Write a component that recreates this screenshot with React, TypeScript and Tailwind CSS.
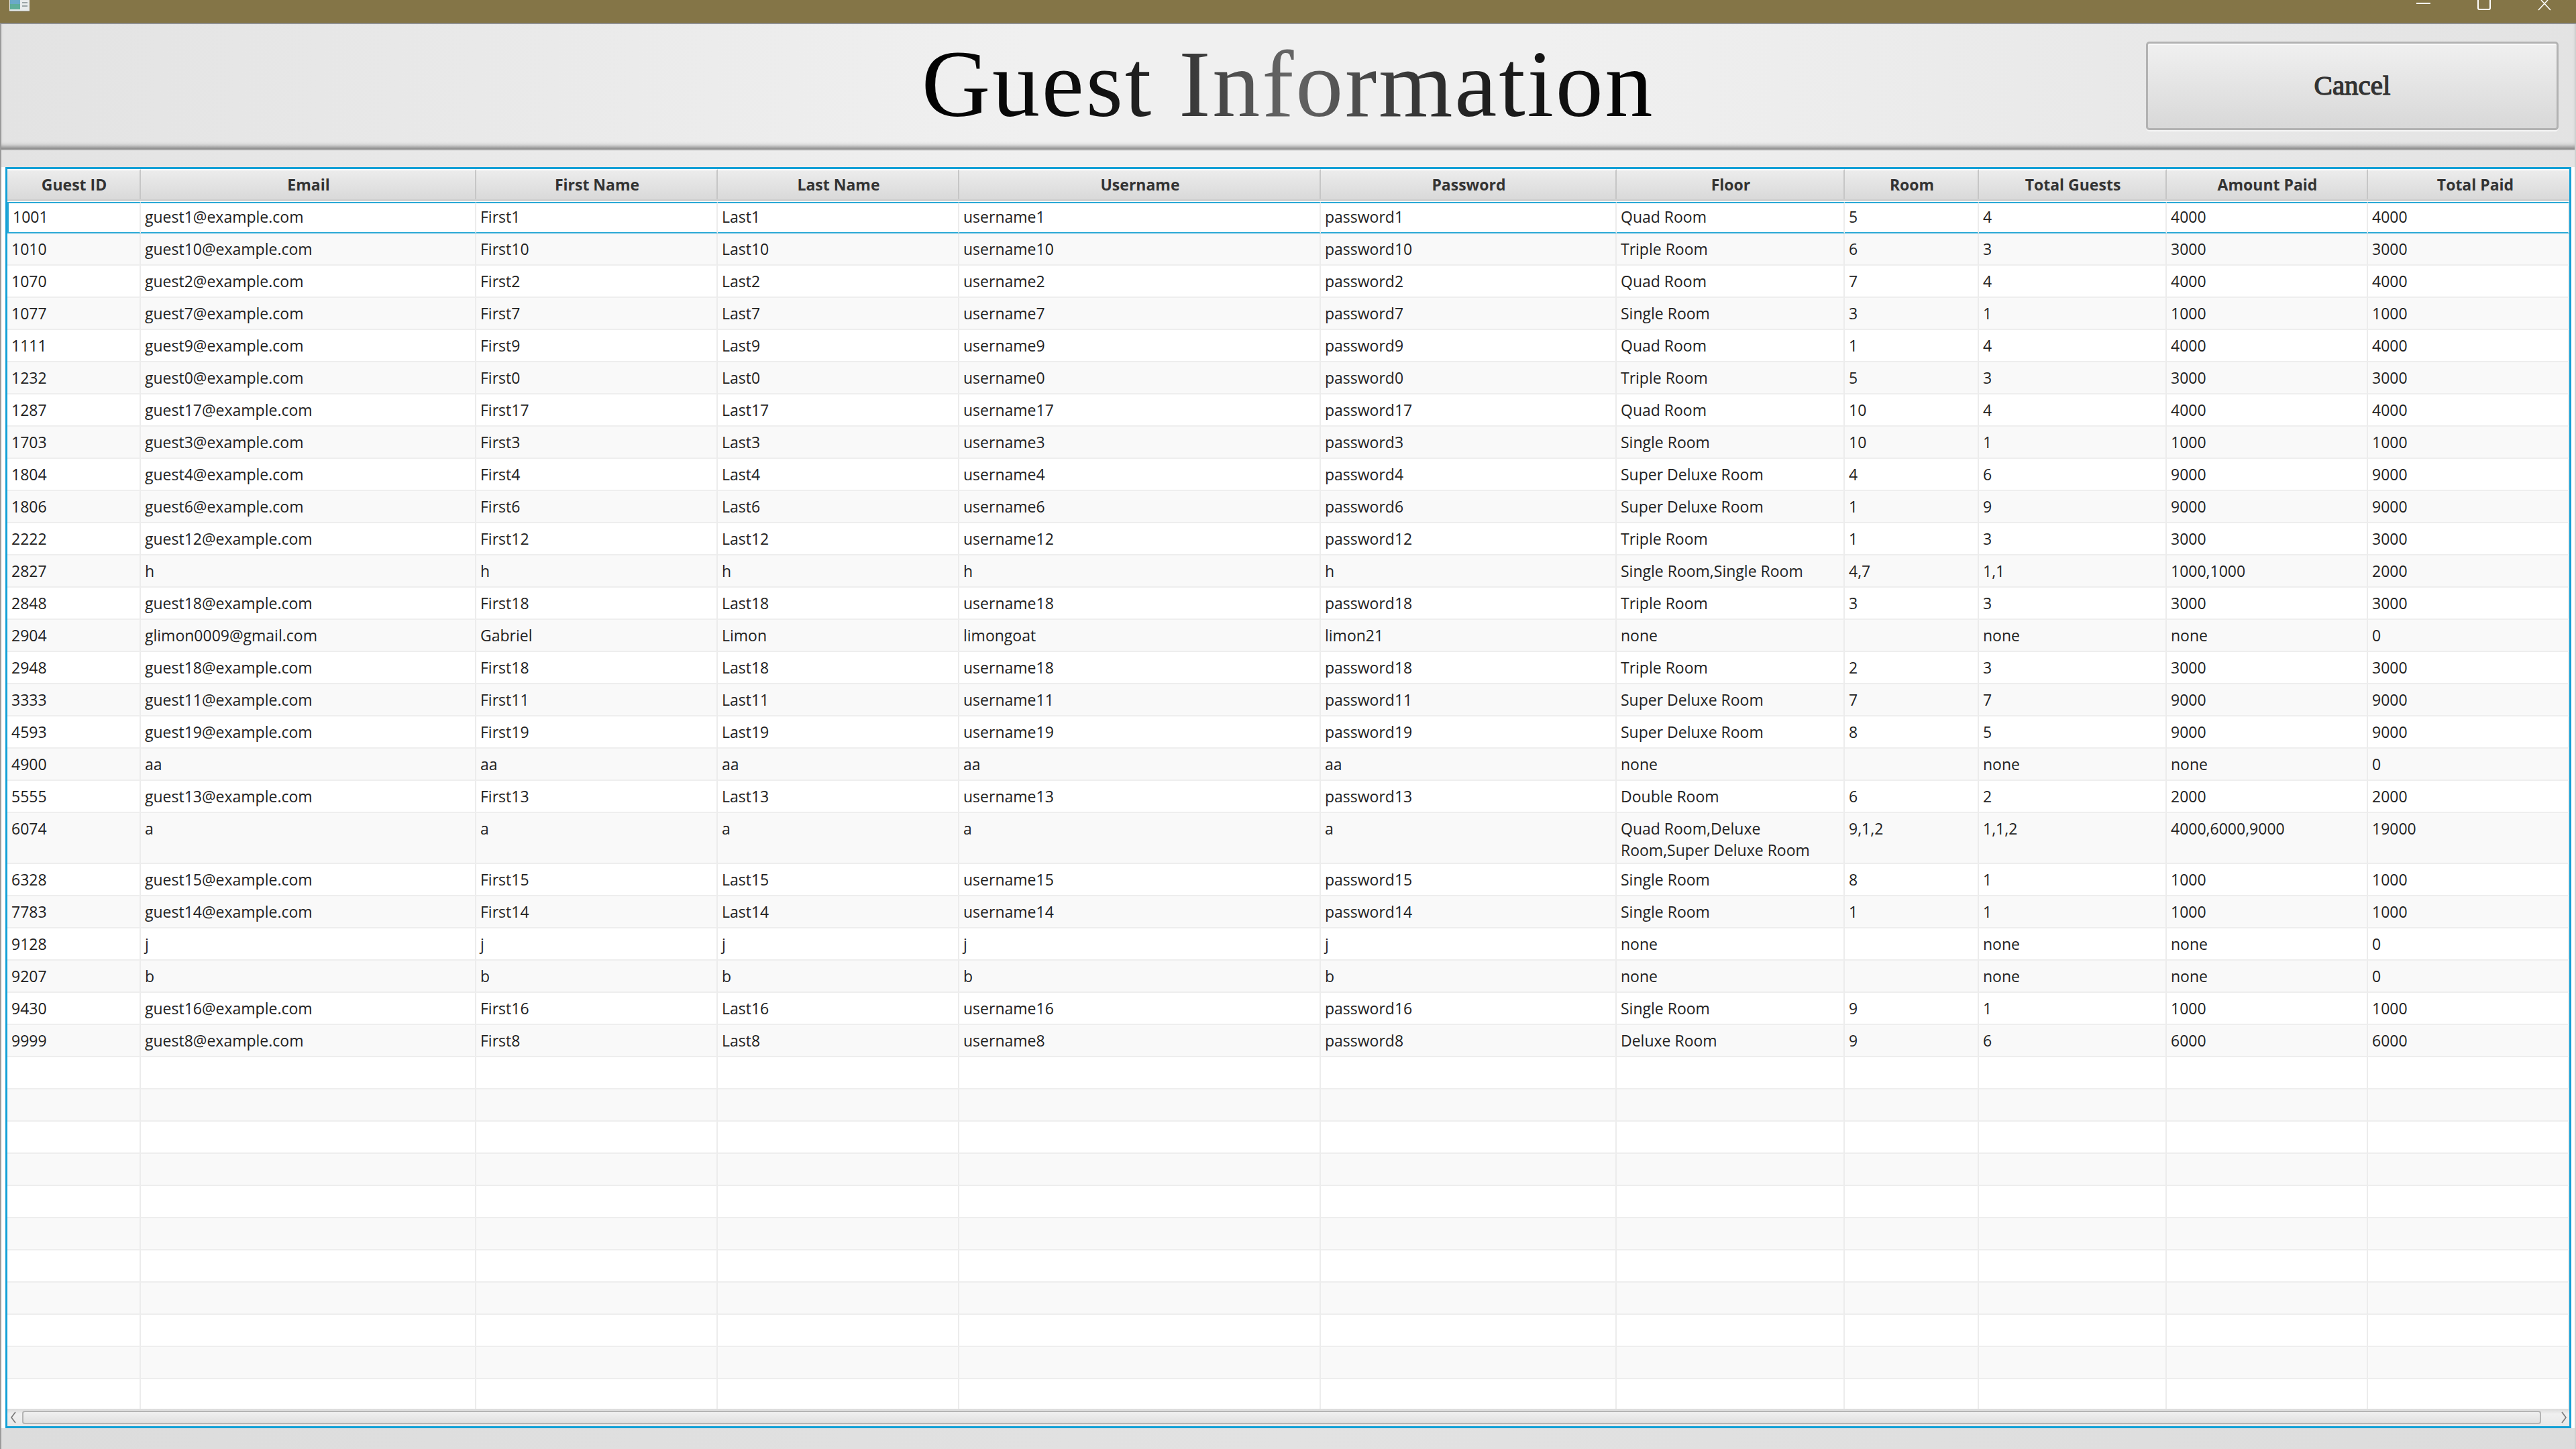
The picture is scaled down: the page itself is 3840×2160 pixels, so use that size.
import React from "react";

const headers = [
  "Guest ID",
  "Email",
  "First Name",
  "Last Name",
  "Username",
  "Password",
  "Floor",
  "Room",
  "Total Guests",
  "Amount Paid",
  "Total Paid",
];

const guest = (
  id: string,
  n: string,
  floor: string,
  room: string,
  total: string,
  paid: string
) => [
  id,
  `guest${n}@example.com`,
  `First${n}`,
  `Last${n}`,
  `username${n}`,
  `password${n}`,
  floor,
  room,
  total,
  paid,
  paid,
];

const blank = (id: string, v: string) => [id, v, v, v, v, v, "none", "", "none", "none", "0"];

const rows: string[][] = [
  guest("1001", "1", "Quad Room", "5", "4", "4000"),
  guest("1010", "10", "Triple Room", "6", "3", "3000"),
  guest("1070", "2", "Quad Room", "7", "4", "4000"),
  guest("1077", "7", "Single Room", "3", "1", "1000"),
  guest("1111", "9", "Quad Room", "1", "4", "4000"),
  guest("1232", "0", "Triple Room", "5", "3", "3000"),
  guest("1287", "17", "Quad Room", "10", "4", "4000"),
  guest("1703", "3", "Single Room", "10", "1", "1000"),
  guest("1804", "4", "Super Deluxe Room", "4", "6", "9000"),
  guest("1806", "6", "Super Deluxe Room", "1", "9", "9000"),
  guest("2222", "12", "Triple Room", "1", "3", "3000"),
  ["2827", "h", "h", "h", "h", "h", "Single Room,Single Room", "4,7", "1,1", "1000,1000", "2000"],
  guest("2848", "18", "Triple Room", "3", "3", "3000"),
  ["2904", "glimon0009@gmail.com", "Gabriel", "Limon", "limongoat", "limon21", "none", "", "none", "none", "0"],
  guest("2948", "18", "Triple Room", "2", "3", "3000"),
  guest("3333", "11", "Super Deluxe Room", "7", "7", "9000"),
  guest("4593", "19", "Super Deluxe Room", "8", "5", "9000"),
  blank("4900", "aa"),
  guest("5555", "13", "Double Room", "6", "2", "2000"),
  ["6074", "a", "a", "a", "a", "a", "Quad Room,Deluxe Room,Super Deluxe Room", "9,1,2", "1,1,2", "4000,6000,9000", "19000"],
  guest("6328", "15", "Single Room", "8", "1", "1000"),
  guest("7783", "14", "Single Room", "1", "1", "1000"),
  blank("9128", "j"),
  blank("9207", "b"),
  guest("9430", "16", "Single Room", "9", "1", "1000"),
  guest("9999", "8", "Deluxe Room", "9", "6", "6000"),
  ...Array.from({ length: 11 }, () => Array(11).fill("")),
];

const gridCols =
  "grid grid-cols-[199px_500px_360px_360px_539px_441px_340px_200px_280px_300px_300px]";

const bandBg = "bg-[linear-gradient(90deg,#e3e3e3_0%,#f0f0f0_40%,#f0f0f0_60%,#e3e3e3_100%)]";

function Row({ row, index }: { row: string[]; index: number }) {
  const selected = index === 0;
  const tall = row[0] === "6074";
  return (
    <div
      className={`${gridCols} ${tall ? "h-[76px]" : "h-[48px]"} ${
        index % 2 === 0 ? "bg-white" : "bg-[#f9f9f9]"
      }`}
    >
      {row.map((value, i) => (
        <div
          key={i}
          className={`border-r-2 border-r-[#ececec] pl-[6px] pr-2 leading-[32px] ${
            selected
              ? `mt-[1px] border-y-2 border-y-[#2ba9d6] pt-[4px] ${i === 0 ? "border-l-2 border-l-[#2ba9d6] pl-[2px]" : ""} ${
                  i === 10 ? "border-r-[#2ba9d6]" : ""
                }`
              : `border-b-2 border-b-[#eeeeee] pt-[7px] ${i === 0 ? "pl-[4px]" : ""}`
          }`}
        >
          {value}
        </div>
      ))}
    </div>
  );
}

function ScrollBar() {
  return (
    <div className="flex h-[26px] items-center bg-[linear-gradient(180deg,#dadada,#f0f0f0_30%,#e8e8e8)] pr-[2px] pl-[3px]">
      <svg width="12" height="22" viewBox="0 0 12 22" fill="none" stroke="#777777" strokeWidth="1.6">
        <path d="M9 3L3 11L9 19" />
      </svg>
      <div className="mr-[28px] ml-[7px] h-[20px] flex-1 rounded-[4px] border-2 border-[#b4b4b4] bg-[linear-gradient(180deg,#f0f0f0,#e0e0e0)]" />
      <svg width="12" height="22" viewBox="0 0 12 22" fill="none" stroke="#777777" strokeWidth="1.6">
        <path d="M3 3L9 11L3 19" />
      </svg>
    </div>
  );
}

export default function App() {
  return (
    <div className="flex h-[2160px] w-[3840px] flex-col overflow-hidden font-['Open_Sans',sans-serif]">
      {/* title bar, the icons are cut off by the top of the screen */}
      <div className="flex h-[36px] shrink-0 items-start border-b-2 border-b-[#8f8f8f] bg-[#847547] pl-[14px]">
        <svg width="30" height="17" viewBox="0 0 30 17">
          <rect x="0" y="0" width="30" height="17" fill="#e8ecec" />
          <rect x="1" y="0" width="15" height="14" fill="#5fae9a" />
          <rect x="1" y="0" width="15" height="6" fill="#6aa9c9" />
          <rect x="19" y="3" width="8" height="2" fill="#9aa4a6" />
          <rect x="19" y="8" width="8" height="2" fill="#9aa4a6" />
          <rect x="0" y="16" width="30" height="1" fill="#9a9a9a" />
        </svg>
        <div className="ml-auto flex items-start gap-[70px] pr-[37px]">
          <svg width="21" height="16" viewBox="0 0 21 16">
            <rect x="0" y="4" width="21" height="2" fill="#fff" />
          </svg>
          <svg width="20" height="16" viewBox="0 0 20 16" fill="none" stroke="#fff" strokeWidth="2">
            <path d="M1 0V12a2 2 0 0 0 2 2H17a2 2 0 0 0 2-2V0" />
          </svg>
          <svg width="20" height="16" viewBox="0 0 20 16" fill="none" stroke="#fff" strokeWidth="1.6">
            <path d="M5 0L19 15M15 0L1 15" />
          </svg>
        </div>
      </div>

      <div className="flex min-h-0 flex-1 flex-col border-x-2 border-x-[#9a9a9a] border-r-[#d0d0d0]">
        {/* heading */}
        <div
          className={`grid h-[187px] shrink-0 grid-cols-[1fr_auto_1fr] shadow-[inset_0_-9px_7px_-5px_rgba(60,60,60,0.65)] ${bandBg}`}
        >
          <div />
          <h1 className="mt-[9px] bg-[linear-gradient(90deg,#000000_0%,#111111_25%,#666666_50%,#222222_75%,#000000_100%)] bg-clip-text font-['Liberation_Serif',serif] text-[142px] leading-[160px] font-normal tracking-[2.8px] text-transparent">
            Guest Information
          </h1>
          <button className="mt-[26px] mr-[24px] h-[132px] w-[615px] justify-self-end rounded-[5px] border-[3px] border-[#b2b2b2] bg-[linear-gradient(180deg,#f0f0f0,#d8d8d8)] font-['Liberation_Serif',serif] text-[41px] font-normal text-[#333333] shadow-[0_2px_0_#f5f5f5,inset_0_2px_0_#fafafa] [-webkit-text-stroke:1.3px_#333333]">
            Cancel
          </button>
        </div>
        <div className={`h-[26px] shrink-0 border-t-2 border-t-[#dddddd] ${bandBg}`} />

        {/* table */}
        <div className="ml-[6px] mr-[5px] h-[1880px] shrink-0 border-[3px] border-[#13a0d6] bg-white text-[23px] text-[#222222]">
          <div className={`${gridCols} h-[48px] border-b-[3px] border-b-[#cfcfcf] bg-[linear-gradient(180deg,#ededed,#d9d9d9)]`}>
            {headers.map((h) => (
              <div
                key={h}
                className="flex items-center justify-center border-t-2 border-t-white border-r-2 border-r-[#c6c6c6] pl-[2px] text-[23px] font-bold text-[#333333] last:border-r-0 last:pl-[20px]"
              >
                {h}
              </div>
            ))}
          </div>
          <div className="h-[1800px] overflow-hidden">
            {rows.map((row, i) => (
              <Row key={i} row={row} index={i} />
            ))}
          </div>
          <ScrollBar />
        </div>
        <div className="flex-1 bg-[linear-gradient(90deg,#dcdcdc,#e2e2e2_50%,#dcdcdc)]" />
      </div>
    </div>
  );
}
